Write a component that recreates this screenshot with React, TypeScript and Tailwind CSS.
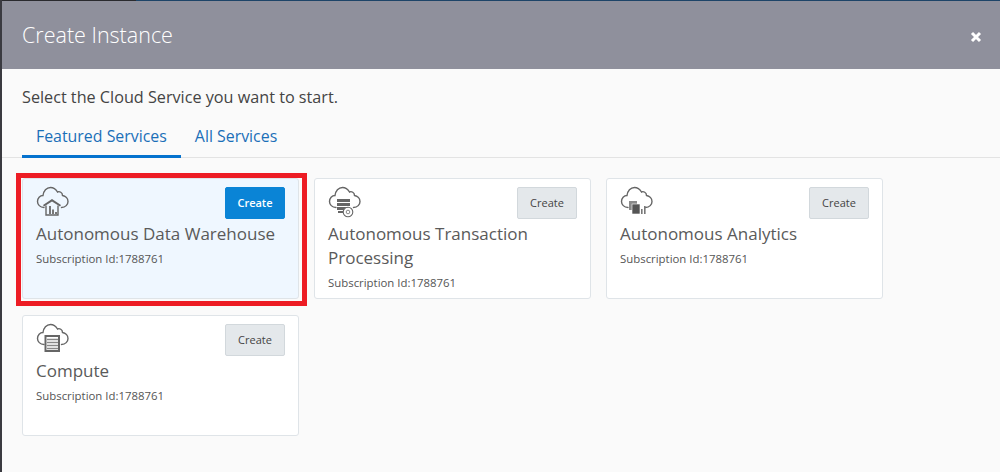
const FONT = "font-['Open_Sans','Noto_Sans',sans-serif]";

const ICON = "#666";

const CloudOutline = () => (
  <path
    d="M8 21.5C4 21.5 1.5 18.5 1.5 15.5C1.5 12 4 9.5 7 9.5C7.5 5 10.5 1.5 14.5 1.5C17.5 1.5 20 3.5 21.5 6C23.5 5 26.5 6.5 26.5 9.5C29.5 10 32 12.5 32 15.5C32 18.5 29.5 21.5 25.5 21.5"
    fill="none"
    stroke={ICON}
    strokeWidth="1.4"
    strokeLinecap="round"
  />
);

const Icon = ({ children }: { children: React.ReactNode }) => (
  <svg width="33" height="33" viewBox="0 0 33 33" className="overflow-visible">
    <CloudOutline />
    {children}
  </svg>
);

const WarehouseIcon = () => (
  <Icon>
    <path d="M16 13L25 19L24 20.5L16 15.5L8 20.5L7 19Z" fill={ICON} />
    <path d="M10 19.5V29H22V19.5" fill="none" stroke={ICON} strokeWidth="1.4" />
    <path d="M13 20H15V28H13ZM16 23.5H18V28H16ZM19 26H21V28H19Z" fill="#777" />
  </Icon>
);

const DatabaseIcon = () => (
  <Icon>
    <path d="M9 13H22V16H9ZM9 17H22V20H9ZM9 21H20V24H9ZM10 25H15V27H10Z" fill={ICON} />
    <circle cx="20" cy="26" r="4.8" fill="#fff" stroke={ICON} strokeWidth="1.1" />
    <circle cx="20" cy="26" r="1.8" fill="none" stroke="#888" strokeWidth="1" />
  </Icon>
);

const AnalyticsIcon = () => (
  <Icon>
    <rect x="9" y="15" width="8" height="9" fill="#8a8a8a" />
    <rect x="12" y="18" width="8" height="10" fill="#555" stroke="#fff" strokeWidth="0.6" />
    <rect x="21" y="23" width="1.6" height="5" fill="#777" />
    <rect x="24" y="20" width="1.6" height="8" fill="#777" />
  </Icon>
);

const ComputeIcon = () => (
  <Icon>
    <rect x="9.5" y="13" width="13.5" height="15" fill="none" stroke={ICON} strokeWidth="2" />
    <path d="M11 16.5H22M11 19.5H22M11 22.5H22M11 25.5H22" stroke="#888" strokeWidth="1.4" />
  </Icon>
);

const services = [
  { name: "Autonomous Data Warehouse", icon: <WarehouseIcon />, active: true },
  { name: "Autonomous Transaction Processing", icon: <DatabaseIcon /> },
  { name: "Autonomous Analytics", icon: <AnalyticsIcon /> },
  { name: "Compute", icon: <ComputeIcon /> },
];

const ServiceCard = ({ name, icon, active }: { name: string; icon: React.ReactNode; active?: boolean }) => (
  <div
    className={`relative h-[121px] w-[277px] rounded-[3px] border border-[#dfe4e8] px-[13px] pt-[7px] ${
      active ? "bg-[#eff7ff]" : "bg-white"
    }`}
  >
    <div className="h-[33px]">{icon}</div>
    <div className="mt-[3px] text-[17px] leading-[24px] text-[#5a5a5a]">{name}</div>
    <div className="mt-[5px] text-[11.4px] leading-[16px] text-[#555]">Subscription Id:1788761</div>
    <button
      className={`absolute right-[13px] top-[8px] h-[32px] w-[60px] rounded-[2px] border text-[11px] ${
        active
          ? "border-[#0a84d6] bg-[#0a84d6] font-semibold text-white"
          : "border-[#d2d8dc] bg-[#e4e8eb] text-[#444]"
      }`}
    >
      Create
    </button>
    {active && (
      <div className="pointer-events-none absolute left-[-7px] top-[-6px] h-[133px] w-[291px] border-[5px] border-[#ed1c24]" />
    )}
  </div>
);

export default function App() {
  return (
    <div className={`flex h-[472px] w-[1000px] flex-col overflow-hidden border-l-2 border-[#3a3a40] bg-[#fafafa] ${FONT}`}>
      <div className="flex h-px shrink-0">
        <div className="w-[134px] bg-[#2a2a2e]" />
        <div className="flex-1 bg-[#1d4468]" />
      </div>
      <div className="flex h-[68px] shrink-0 items-center justify-between bg-[#8f909c] pl-5 pr-[18px]">
        <div className="pt-[1px] text-[21.5px] font-light text-white">Create Instance</div>
        <svg className="mt-1" width="12" height="12" viewBox="0 0 12 12">
          <path d="M2 2L10 10M10 2L2 10" stroke="#fff" strokeWidth="3" />
        </svg>
      </div>
      <div className="pl-5 pt-[17px] text-[16.2px] leading-[22px] text-[#444]">Select the Cloud Service you want to start.</div>
      <div className="mt-[15px] flex h-[35px] gap-[14px] border-b border-[#e3e3e3] pl-5 pt-[1px]">
        <div className="h-[34px] border-b-[3px] border-[#0572ce] px-[14px] text-[15.9px] leading-[24px] text-[#1a6fb8]">Featured Services</div>
        <div className="text-[15.9px] leading-[24px] text-[#1a6fb8]">All Services</div>
      </div>
      <div className="flex flex-wrap gap-x-[15px] gap-y-[16px] pl-5 pt-5">
        {services.map((s) => (
          <ServiceCard key={s.name} {...s} />
        ))}
      </div>
    </div>
  );
}
